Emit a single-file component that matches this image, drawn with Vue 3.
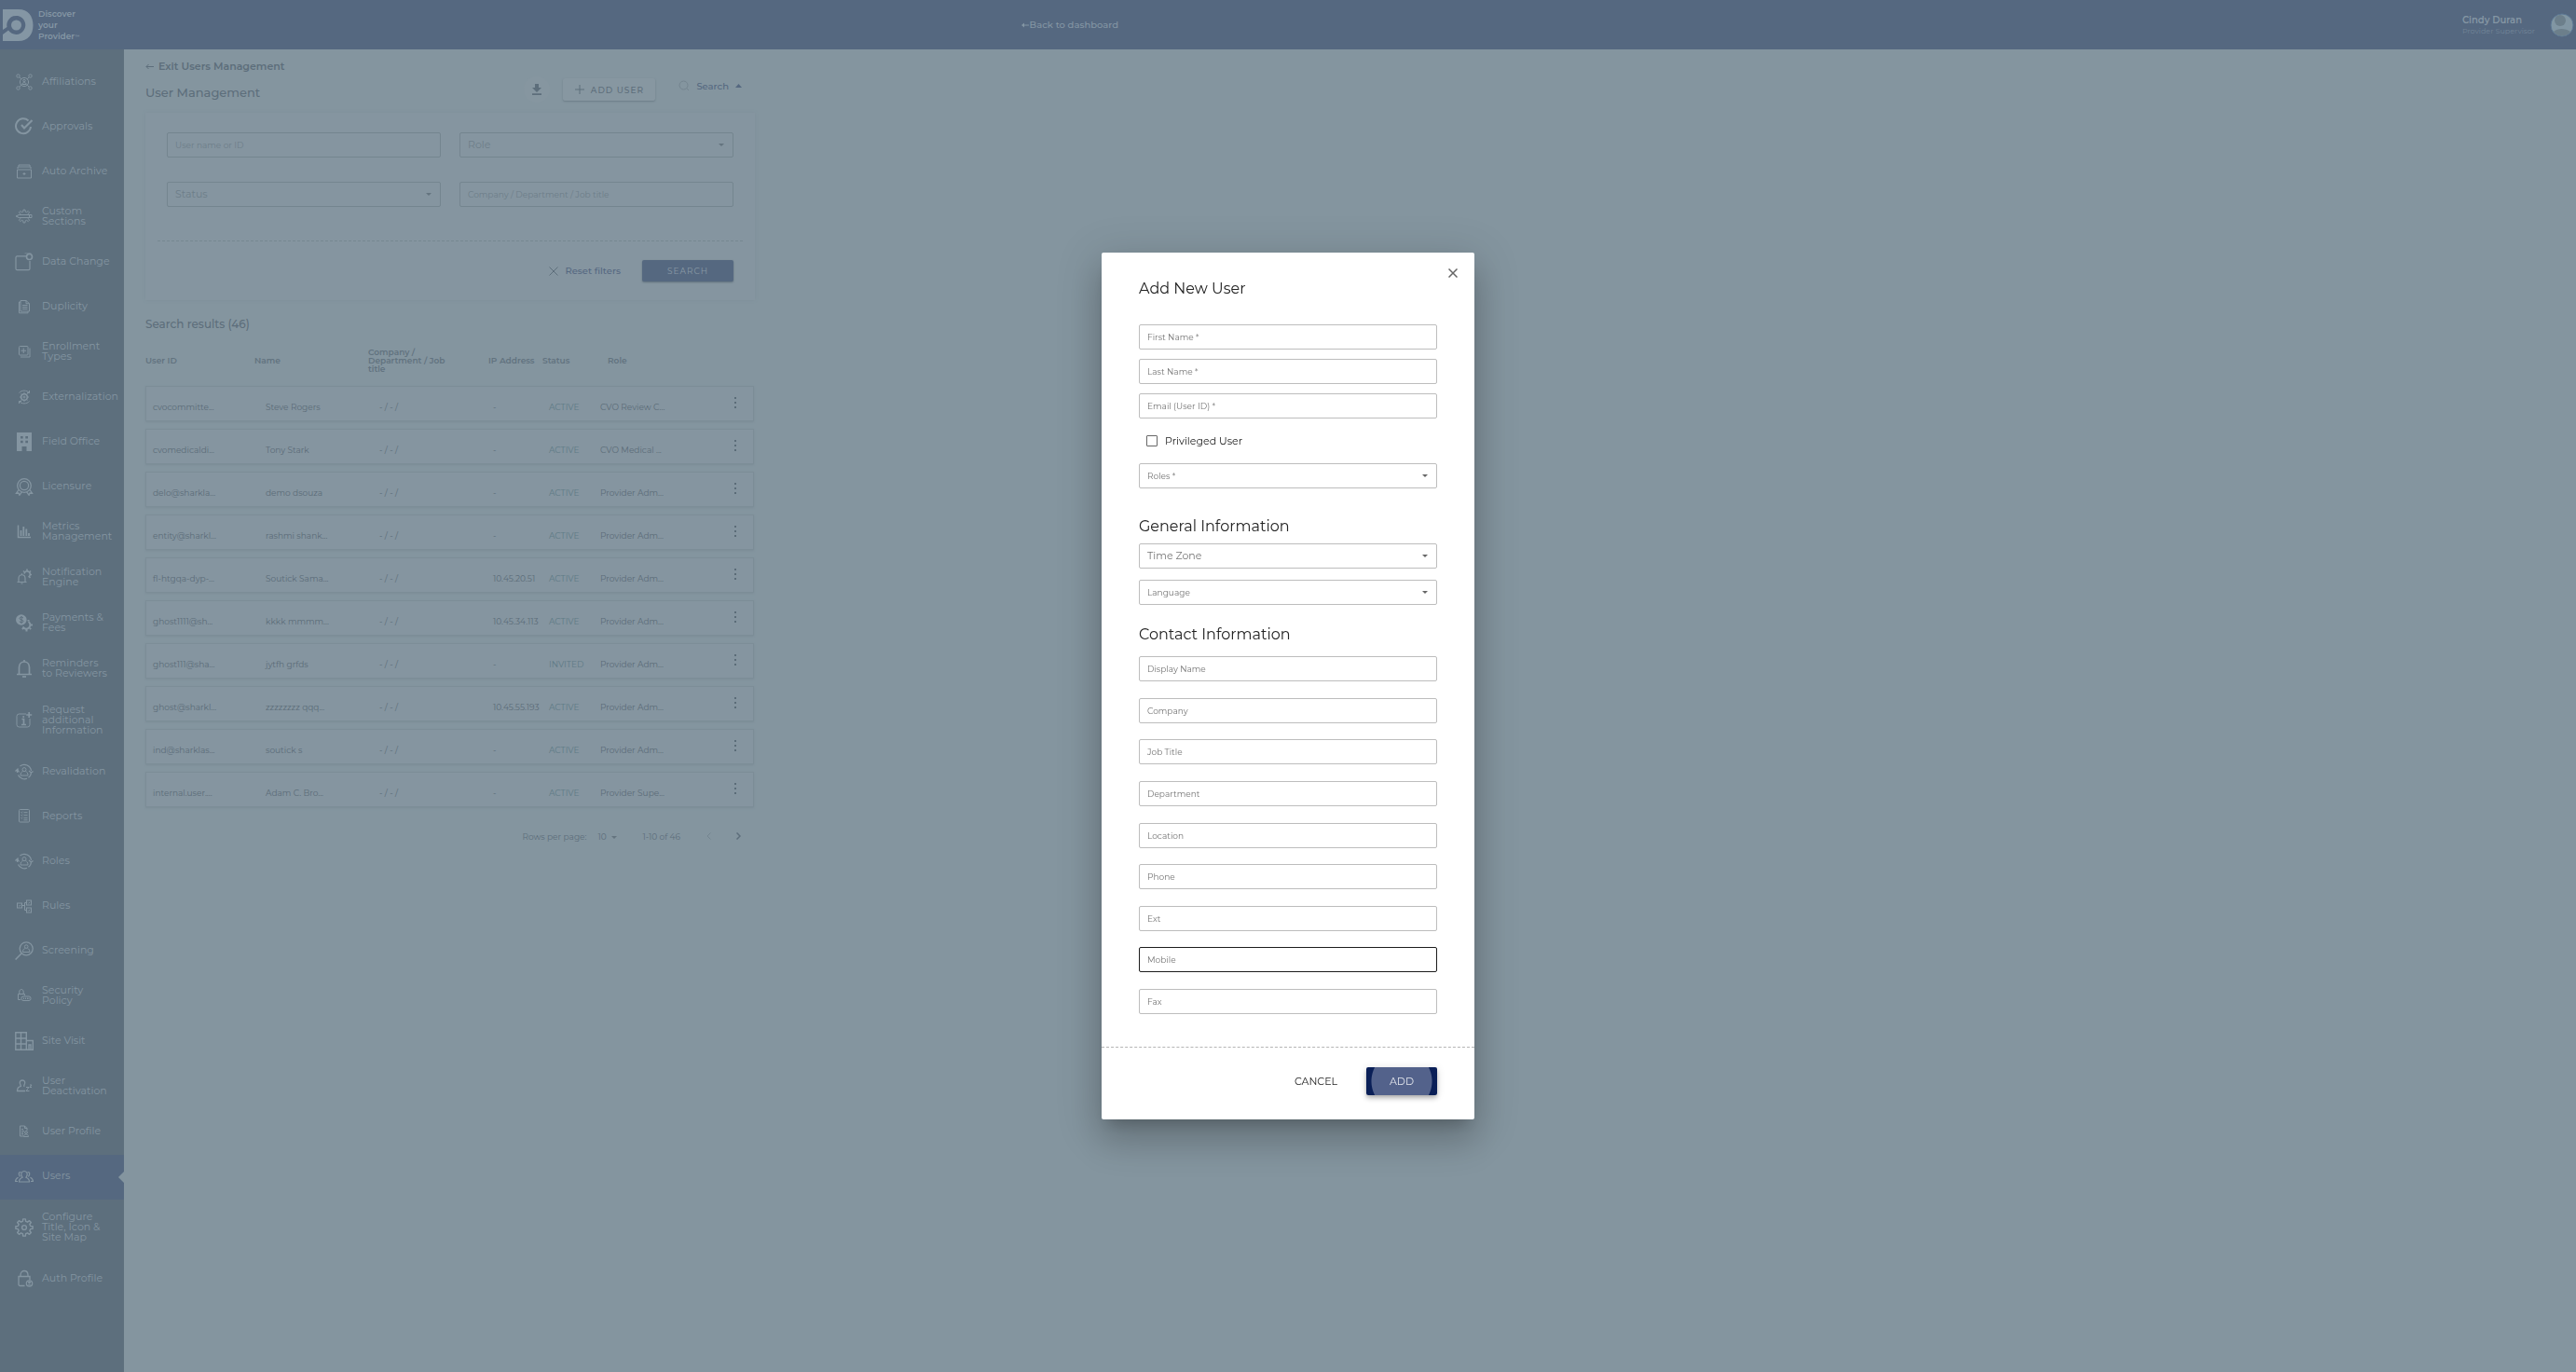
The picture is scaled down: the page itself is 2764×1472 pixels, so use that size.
<script setup>
import { ref } from 'vue'

// Outline of an eight-toothed cog centred in the 20x20 icon box
function cog(outer, inner) {
  const points = []
  for (let i = 0; i < 8; i++) {
    for (const [offset, radius] of [[-14, inner], [-8, outer], [8, outer], [14, inner]]) {
      const a = ((i * 45 + offset) * Math.PI) / 180
      points.push((10 + radius * Math.sin(a)).toFixed(2) + ' ' + (10 - radius * Math.cos(a)).toFixed(2))
    }
  }
  return '<path d="M' + points.join('L') + 'z"/>'
}

const person = '<circle cx="10" cy="7.6" r="2"/><path d="M6 14c0-3 1.200-4 2.600-4.400M14 14c0-3-1.200-4-2.600-4.400M6 14h8"/>'
const cycle = '<path stroke-width="1.200" d="M2.500 11a7.500 7.500 0 0 1 1-4.500M5.500 4a7.500 7.500 0 0 1 12 5M17.500 10.500a7.500 7.500 0 0 1-3 5.800M0.500 9.500l2-2 2 3M15 9l2.500 2L19.500 9.500M3.500 13.500a7.500 7.500 0 0 0 9.500 3.800"/>'

const menu = ref([
  { label: 'Affiliations', icon: '<circle cx="3.500" cy="3.500" r="1.700"/><circle cx="16.500" cy="3.500" r="1.700"/><circle cx="3.500" cy="16.500" r="1.700"/><circle cx="16.500" cy="16.500" r="1.700"/><path d="M4.800 4.800l2 2M15.200 4.800l-2 2M4.800 15.200l2-2M15.200 15.200l-2-2"/><circle cx="10" cy="10" r="4.600"/><circle cx="10" cy="8.500" r="1.200"/><path d="M7.800 12.500c0-2.600 4.400-2.600 4.400 0z"/>' },
  { label: 'Approvals', icon: '<path stroke-width="2" d="M14.500 3.400A8 8 0 1 0 17 10"/><path stroke-width="2.200" d="M7 8l3 3.500 8.500-8.500"/>' },
  { label: 'Auto Archive', icon: '<path d="M4 4.500V3h12v1.500M3 7V5h14v2M2.500 8h15v9h-15zM8.500 12.500h3M10 11v3"/>' },
  { label: 'Custom\nSections', icon: cog(7, 5) + '<path fill="#5d6f7d" d="M1 10l3.500-1.500h13.500v3H4.500zM15.500 8.500v3"/>' },
  { label: 'Data Change', icon: '<path stroke-width="1.200" d="M12 3.800H2.500A1.500 1.500 0 0 0 1 5.300v11.900a1.500 1.500 0 0 0 1.500 1.500h12a1.500 1.500 0 0 0 1.500-1.500V9"/><circle cx="15.500" cy="4.500" r="3" stroke-width="1.600"/><path stroke-width=".6" d="M10.500.8h7"/>' },
  { label: 'Duplicity', icon: '<path d="M6 3.500h6l3.500 3.200V15H6zM12 3.500v3.200h3.500M6 5H4.500v11.800h9.500V15.200M8 8.500h5.500M8 10.500h5.500M8 12.500h5.500"/>' },
  { label: 'Enrollment\nTypes', icon: '<rect x="4.500" y="4.500" width="9.500" height="9.500" rx="1"/><path d="M9.250 6.500v5.500M6.500 9.250h5.500M16 6.500v9.500H6"/>' },
  { label: 'Externalization', icon: '<circle cx="10" cy="10" r="3.300" stroke-width="1.500"/><circle cx="10" cy="10" r="1"/><path d="M10 5v1.500M10 13.500V15M5 10h1.500M13.500 10H15M6.500 6.500l1 1M12.500 12.500l1 1M13.500 6.500l-1 1M7.500 12.500l-1 1M4.500 5.500c3-3.200 8-3.200 11 0M4.500 14.500c3 3.200 8 3.200 11 0M15.500 3v2.500H13M4.500 17v-2.500H7"/>' },
  { label: 'Field Office', icon: '<path fill="currentColor" stroke="none" fill-rule="evenodd" d="M2 0h16v20h-5.500v-5h-5v5H2zM6 4v2.500h2.700V4zM11.300 4v2.500H14V4zM6 8.800v2.500h2.700V8.800zM11.300 8.800v2.500H14V8.800z"/>' },
  { label: 'Licensure', icon: '<circle cx="10" cy="9" r="7.300" stroke-width="1.300"/><circle cx="10" cy="9" r="4.600" stroke-width="1.200"/><path stroke-width="1.300" d="M4 13.500l-2.500 3.700 2.500-.2.900 2.200 2.500-3.400M16 13.500l2.500 3.700-2.500-.2-.9 2.200-2.500-3.400"/>' },
  { label: 'Metrics\nManagement', icon: '<path stroke-width="1.500" d="M3.500 3.500v13H17"/><path stroke-width="1.800" d="M6.500 9v6M9.300 5v10M12.300 7.500v7.500M15 12v3"/>' },
  { label: 'Notification\nEngine', icon: '<path stroke-width="1.200" d="M2.500 15.500h10M4 15.500v-4c0-5 7-5 7 0v4M7.500 7.500V6.300M6.500 17h2"/><path stroke-width="1.600" d="M10 6.500a3.200 3.200 0 1 1 4.500 3.500M10 4.500L9 3.500M13 3V1.500M16 4.500l1-1M16.500 7.500H18M15.500 10l1 1"/>' },
  { label: 'Payments &\nFees', icon: '<circle cx="6.800" cy="7" r="5.800" fill="currentColor" stroke="none"/><path stroke="#5d6f7d" d="M9 5c-1.500-1.500-4-1-4 .5 0 2 4 1 4 3 0 1.500-2.800 1.700-4.200.3M7 3v8"/><path stroke-width="2" d="M8.500 14.500a4.200 4.200 0 1 0 6-5.500M14.500 8.500V7M17 12.500h2M16 16l1.200 1M12.500 17.500v2M9 16l-1.200 1"/>' },
  { label: 'Reminders\nto Reviewers', icon: '<path stroke-width="1.700" d="M2 16.500h16M4.500 16V9c0-8 11-8 11 0v7M10 3V1"/><path stroke-width="1.700" d="M8 19h4"/>' },
  { label: 'Request\nadditional\nInformation', tall: true, icon: '<path d="M12 3H4.500A2.500 2.500 0 0 0 2 5.500v9A2.500 2.500 0 0 0 4.500 17h9a2.500 2.500 0 0 0 2.500-2.500V8"/><path stroke-width="1.700" d="M15.200 1v6M12.200 4h6M7.500 8.500h2v6M7 14.500h5"/><circle cx="9.200" cy="6" r="1" fill="currentColor" stroke="none"/>' },
  { label: 'Revalidation', icon: cycle + person },
  { label: 'Reports', icon: '<rect x="4.500" y="2.500" width="11" height="13.500" rx="1"/><path d="M6.500 5.500l.7.700L8.400 5M9.500 5.700h4M6.500 8.500l.7.700L8.400 8M9.500 8.700h4M6.500 11.500l.7.700 1.200-1.200M9.500 11.700h4M9.500 13.800h4"/>' },
  { label: 'Roles', icon: cycle + person },
  { label: 'Rules', icon: '<rect x="2.500" y="7" width="5" height="5"/><rect x="12.500" y="4" width="5" height="5"/><rect x="12.500" y="12" width="5" height="5"/><path d="M7.500 9.500h2.500M12 6.500h-1.500v8H12M4 9.500l.8.800 1.500-1.500M14 6.500l.8.800L16.300 5.800M14 14.500l.8.800 1.500-1.500"/>' },
  { label: 'Screening', icon: '<circle cx="12.200" cy="7.800" r="7" stroke-width="1.300"/><path stroke-width="1.500" d="M7 13L.6 19.500"/><circle cx="12.200" cy="5.600" r="1.800"/><path d="M8.500 11.500c0-2.500 1-3.500 2.300-3.900M15.900 11.500c0-2.500-1-3.500-2.300-3.900M8.500 11.500h7.400"/>' },
  { label: 'Security\nPolicy', icon: '<path d="M6 14.500H3.500V8.500h7V10M4.800 8.500V6c0-3.300 4.400-3.300 4.400 0v2.500"/><rect x="7" y="11" width="10" height="4.500" rx="2"/><path d="M9.500 12.500v1.500M11.500 12.500v1.500M13.500 12.500v1.500M15 12.500v1.500"/>' },
  { label: 'Site Visit', icon: '<path stroke-width="1.400" d="M.8.800h11.500v18.400H.8zM.8 7h11.500M.8 13h11.500M6.500.8v18.400M12.300 9.500h7v9.700h-7M15 19v-5h2v5"/>' },
  { label: 'User\nDeactivation', icon: '<path stroke-width="1.300" d="M11 15.500H2.500c0-3 1-4.200 3.300-4.800.8-.3.700-.9.300-1.400C4.300 6.500 5.500 4 8 4s3.700 2.500 1.900 5.300c-.4.500-.3 1.100.5 1.400"/><path d="M12 11.500h3l-3 4h3.500M16 9h2l-2 2.500h2"/>' },
  { label: 'User Profile', icon: '<path d="M9 15H5.500V4h5L13 6.500V9M10.500 4v2.500H13M7 7.500h2M7 9.500h3M7 11.500h2M7 13h2"/><circle cx="12" cy="11" r="1.400"/><path d="M9.500 15.500c0-3.500 5-3.500 5 0z"/>' },
  { label: 'Users', active: true, icon: '<path stroke-width="1.200" d="M4.500 16c0-3 1.500-4 3.500-4.800C5.500 8 7 4.500 10 4.500s4.500 3.500 2 6.700c2 .8 3.500 1.800 3.500 4.800zM5.500 10.500C3 6.500 4.500 5.500 6.500 5.500M3 15.500H.6c0-2.500 1-3.500 3-4.300M14.500 10.500C17 6.500 15.500 5.500 13.500 5.500M17 15.500h2.400c0-2.500-1-3.500-3-4.300"/>' },
  { label: 'Configure\nTitle, Icon &\nSite Map', tall: true, icon: '<g stroke-width="1.400" stroke-linejoin="round">' + cog(9.2, 6.8) + '<circle cx="10" cy="10" r="2.400"/></g>' },
  { label: 'Auth Profile', icon: '<path stroke-width="1.300" d="M10.500 17.500h-5a1.500 1.500 0 0 1-1.500-1.500V7.500h12V11M6 7.500V6c0-6 8-6 8 0v1.500"/><circle cx="15.500" cy="15" r="3.200" stroke-width="1.200"/><circle cx="15.500" cy="14" r="1" fill="currentColor"/><path d="M13.500 16.800h4"/>' }
])

const users = ref([
  { id: 'cvocommitte...', name: 'Steve Rogers', ip: '-', status: 'ACTIVE', role: 'CVO Review C...' },
  { id: 'cvomedicaldi...', name: 'Tony Stark', ip: '-', status: 'ACTIVE', role: 'CVO Medical ...' },
  { id: 'delo@sharkla...', name: 'demo dsouza', ip: '-', status: 'ACTIVE', role: 'Provider Adm...' },
  { id: 'entity@sharkl...', name: 'rashmi shank...', ip: '-', status: 'ACTIVE', role: 'Provider Adm...' },
  { id: 'fl-htgqa-dyp-...', name: 'Soutick Sama...', ip: '10.45.20.51', status: 'ACTIVE', role: 'Provider Adm...' },
  { id: 'ghost1111@sh...', name: 'kkkk mmmm...', ip: '10.45.34.113', status: 'ACTIVE', role: 'Provider Adm...' },
  { id: 'ghost111@sha...', name: 'jytfh grfds', ip: '-', status: 'INVITED', role: 'Provider Adm...' },
  { id: 'ghost@sharkl...', name: 'zzzzzzzz qqq...', ip: '10.45.55.193', status: 'ACTIVE', role: 'Provider Adm...' },
  { id: 'ind@sharklas...', name: 'soutick s', ip: '-', status: 'ACTIVE', role: 'Provider Adm...' },
  { id: 'internal.user....', name: 'Adam C. Bro...', ip: '-', status: 'ACTIVE', role: 'Provider Supe...' }
])

const identityFields = ['First Name *', 'Last Name *', 'Email (User ID) *']
const contactFields = ['Display Name', 'Company', 'Job Title', 'Department', 'Location', 'Phone', 'Ext', 'Mobile', 'Fax']
</script>

<template>
  <div class="page">
    <header class="topbar">
      <a class="brand" href="#">
        <svg width="33" height="34" viewBox="0 0 33 34" aria-hidden="true">
          <path fill="currentColor" fill-rule="evenodd" d="M0 0h17c10 0 15.500 7 15.500 17S27 34 17 34H0v-7l6-4.500A10 10 0 1 0 4.500 19L0 22zM14.500 11.500a5.500 5.500 0 1 1 0 11 5.500 5.500 0 0 1 0-11z" />
        </svg>
        <span class="brand-text">Discover<br />your<br />Provider<small>™</small></span>
      </a>
      <a class="back" href="#">
        <svg width="9" height="6" viewBox="0 0 9 6" aria-hidden="true"><path fill="currentColor" d="M0 3l3-2.500v2h5v1H3v2z" /></svg>Back to dashboard
      </a>
      <div class="account">
        <div>
          <div class="account-name">Cindy Duran</div>
          <div class="account-role">Provider Supervisor</div>
        </div>
        <svg class="avatar" width="26" height="26" viewBox="0 0 26 26" aria-hidden="true">
          <circle cx="13" cy="13" r="12" fill="#8196a3" stroke="#5c7894" />
          <circle cx="11" cy="8" r="6" fill="#6c7f8b" />
          <path fill="#6c7f8b" d="M4 20c4-4 13-4 18 0-4 6-14 6-18 0z" />
        </svg>
      </div>
    </header>

    <div class="body">
      <nav class="sidebar">
        <a v-for="item in menu" :key="item.label" href="#" class="nav-item" :class="{ active: item.active, tall: item.tall }">
          <svg class="nav-icon" viewBox="0 0 20 20" fill="none" stroke="currentColor" aria-hidden="true" v-html="item.icon"></svg>
          <span class="nav-label">{{ item.label }}</span>
        </a>
      </nav>

      <main class="content">
        <a class="exit" href="#">
          <svg width="9" height="7" viewBox="0 0 9 7" fill="none" stroke="currentColor" aria-hidden="true"><path d="M9 3.500H1M3.500 1L1 3.500 3.500 6" /></svg>
          Exit Users Management
        </a>
        <div class="title-row">
          <h1>User Management</h1>
          <button class="download" type="button" aria-label="Download">
            <svg width="10" height="12" viewBox="0 0 10 12" fill="currentColor" aria-hidden="true"><path d="M3 0h4v4h3L5 9 0 4h3zM0 10.300h10V12H0z" /></svg>
          </button>
          <button class="add-user" type="button">
            <svg width="10" height="10" viewBox="0 0 10 10" stroke="currentColor" aria-hidden="true"><path d="M5 0v10M0 5h10" /></svg>
            ADD USER
          </button>
          <button class="search-toggle" type="button">
            <svg width="12" height="12" viewBox="0 0 12 12" fill="none" stroke="#74848f" aria-hidden="true"><circle cx="5.500" cy="5.500" r="4.500" /><path d="M8.800 8.800l2.200 2.200" /></svg>
            Search
            <svg width="7" height="4" viewBox="0 0 7 4" fill="currentColor" aria-hidden="true"><path d="M0 4l3.500-4L7 4z" /></svg>
          </button>
        </div>

        <form class="filters" @submit.prevent>
          <div class="filter-grid">
            <input class="box" type="text" placeholder="User name or ID" aria-label="User name or ID" />
            <span class="picker"><select class="box large" aria-label="Role"><option>Role</option></select></span>
            <span class="picker"><select class="box large" aria-label="Status"><option>Status</option></select></span>
            <input class="box" type="text" placeholder="Company / Department / Job title" aria-label="Company / Department / Job title" />
          </div>
          <div class="filter-actions">
            <button class="reset" type="reset">
              <svg width="10" height="10" viewBox="0 0 10 10" stroke="#5d6e7b" aria-hidden="true"><path d="M.5.500l9 9M9.500.500l-9 9" /></svg>
              Reset filters
            </button>
            <button class="run" type="submit">SEARCH</button>
          </div>
        </form>

        <h2>Search results (46)</h2>
        <table>
          <colgroup>
            <col class="c-id" /><col class="c-wide" /><col class="c-wide" /><col class="c-ip" /><col class="c-status" /><col class="c-role" /><col />
          </colgroup>
          <thead>
            <tr>
              <th>User ID</th>
              <th>Name</th>
              <th>Company /<br />Department / Job<br />title</th>
              <th class="h-ip">IP Address</th>
              <th class="h-status">Status</th>
              <th class="h-role">Role</th>
              <th></th>
            </tr>
          </thead>
          <tbody>
            <tr v-for="u in users" :key="u.id">
              <td>{{ u.id }}</td>
              <td>{{ u.name }}</td>
              <td>- / - /</td>
              <td>{{ u.ip }}</td>
              <td class="status">{{ u.status }}</td>
              <td>{{ u.role }}</td>
              <td>
                <button class="more" type="button" aria-label="Row actions">
                  <svg width="2" height="12" viewBox="0 0 2 12" fill="currentColor" aria-hidden="true"><path d="M0 0h2v2H0zM0 5h2v2H0zM0 10h2v2H0z" /></svg>
                </button>
              </td>
            </tr>
          </tbody>
        </table>

        <div class="pager">
          <label for="page-size">Rows per page:</label>
          <span class="picker size"><select id="page-size"><option>10</option></select></span>
          <span class="range">1-10 of 46</span>
          <button class="prev" type="button" aria-label="Previous page">
            <svg width="5" height="8" viewBox="0 0 5 8" fill="none" stroke="currentColor" aria-hidden="true"><path d="M4.500.500L1 4l3.500 3.500" /></svg>
          </button>
          <button type="button" aria-label="Next page">
            <svg width="5" height="8" viewBox="0 0 5 8" fill="none" stroke="currentColor" stroke-width="1.500" aria-hidden="true"><path d="M.500.500L4 4 .500 7.500" /></svg>
          </button>
        </div>
      </main>
    </div>

    <div class="backdrop">
      <form class="dialog" role="dialog" aria-labelledby="dialog-title" @submit.prevent>
        <button class="close" type="button" aria-label="Close">
          <svg width="10" height="10" viewBox="0 0 10 10" stroke="currentColor" stroke-width="1.500" aria-hidden="true"><path d="M.500.500l9 9M9.500.500l-9 9" /></svg>
        </button>
        <div class="dialog-body">
          <h2 id="dialog-title">Add New User</h2>
          <div class="identity">
            <input v-for="f in identityFields" :key="f" class="box" type="text" :placeholder="f" :aria-label="f" />
          </div>
          <label class="privileged"><input type="checkbox" />Privileged User</label>
          <span class="picker"><select class="box" aria-label="Roles"><option>Roles *</option></select></span>

          <h3>General Information</h3>
          <div class="general">
            <span class="picker"><select class="box large" aria-label="Time Zone"><option>Time Zone</option></select></span>
            <span class="picker"><select class="box" aria-label="Language"><option>Language</option></select></span>
          </div>

          <h3 class="contact-title">Contact Information</h3>
          <div class="contact">
            <input v-for="f in contactFields" :key="f" class="box" :class="{ current: f === 'Mobile' }" type="text" :placeholder="f" :aria-label="f" />
          </div>
        </div>
        <footer class="dialog-footer">
          <button class="cancel" type="button">CANCEL</button>
          <button class="add" type="submit">ADD</button>
        </footer>
      </form>
    </div>
  </div>
</template>

<style>
body {
  margin: 0;
  background: #84959f;
}
</style>

<style scoped>
* {
  box-sizing: border-box;
}

.page {
  display: flex;
  flex-direction: column;
  min-height: 100vh;
  background: #84959f;
  color: #5d6e7b;
  font-family: Montserrat, Inter, "Open Sans", sans-serif;
  font-size: 11px;
}

a {
  color: inherit;
  text-decoration: none;
}

button {
  padding: 0;
  border: 0;
  background: none;
  color: inherit;
  font: inherit;
}

h1, h2, h3 {
  margin: 0;
  font-weight: 400;
}

.topbar {
  display: flex;
  align-items: center;
  height: 53px;
  background: #556880;
  color: #8496a4;
}

.brand {
  display: flex;
  align-items: center;
  gap: 5px;
  width: calc(40% - 10px);
  padding-left: 3px;
}

.brand-text {
  font-size: 9px;
  font-weight: 600;
  line-height: 12px;
}

.brand-text small {
  font-size: 5px;
  vertical-align: top;
}

.back {
  display: flex;
  align-items: center;
  font-size: 10px;
  font-weight: 500;
}

.account {
  display: flex;
  align-items: center;
  gap: 16px;
  margin-left: auto;
  padding-right: 2px;
}

.account-name {
  font-size: 10px;
  font-weight: 600;
  line-height: 12px;
}

.account-role {
  color: #728598;
  font-size: 8px;
  line-height: 10px;
}

.body {
  display: flex;
  flex: 1;
}

.sidebar {
  flex: 0 0 133px;
  padding-top: 12px;
  background: #5d6f7d;
  color: #8495a1;
}

.nav-item {
  display: flex;
  align-items: center;
  gap: 9px;
  min-height: 48px;
  padding: 12px 0 15px 16px;
}

.nav-item.tall {
  min-height: 62px;
}

.nav-item.active {
  position: relative;
  background: #556880;
}

.nav-item.active::after {
  content: "";
  position: absolute;
  right: 0;
  top: 18px;
  border: 6px solid transparent;
  border-left: 0;
  border-right-color: #84959f;
}

.nav-icon {
  flex: none;
  width: 20px;
  height: 20px;
  margin: -4px 0;
}

.nav-label {
  line-height: 11px;
  white-space: pre;
}

.content {
  width: 677px;
  padding: 10px 0 0 23px;
}

.exit {
  display: flex;
  align-items: center;
  gap: 5px;
  height: 16px;
  font-weight: 600;
}

.title-row {
  display: flex;
  align-items: center;
  height: 34px;
}

h1 {
  margin-right: auto;
  padding-top: 6px;
  font-size: 13px;
  font-weight: 500;
  line-height: 20px;
}

.download {
  display: grid;
  place-items: center;
  width: 28px;
  height: 28px;
  margin-right: 14px;
  border-radius: 50%;
  background: #8696a0;
}

.add-user {
  display: flex;
  align-items: center;
  justify-content: center;
  gap: 7px;
  width: 99px;
  height: 24px;
  border-radius: 2px;
  background: #8797a1;
  box-shadow: 0 1px 2px #6b7c87;
  font-size: 9px;
  font-weight: 500;
  letter-spacing: 1px;
}

.search-toggle {
  display: flex;
  align-items: center;
  gap: 7px;
  margin-right: 14px;
  margin-left: 25px;
  padding-bottom: 8px;
  color: #556880;
  font-size: 10px;
  font-weight: 500;
}

.filters {
  margin-top: 8px;
  padding: 21px 13px 20px;
  background: #8595a0;
  box-shadow: 0 0 3px #7e8f99;
}

.filter-grid {
  display: grid;
  grid-template-columns: 1fr 1fr;
  gap: 26px 20px;
  padding: 0 10px 36px;
  border-bottom: 1px dashed #768791;
}

.box {
  display: block;
  width: 100%;
  height: 27px;
  margin: 0;
  padding: 0 8px;
  border: 1px solid #74858f;
  border-radius: 2px;
  outline: 0;
  background: none;
  appearance: none;
  color: #6d7e89;
  font-family: inherit;
  font-size: 9px;
}

.box::placeholder {
  color: inherit;
  opacity: 1;
}

.box.large {
  padding-bottom: 2px;
  font-size: 11px;
}

.picker {
  display: block;
  position: relative;
}

.picker::after {
  content: "";
  position: absolute;
  top: 12px;
  right: 10px;
  border: 3px solid transparent;
  border-top-color: #64747f;
  border-bottom: 0;
  pointer-events: none;
}

.filter-actions {
  display: flex;
  align-items: center;
  justify-content: flex-end;
  gap: 23px;
  padding: 20px 10px 0 0;
}

.reset {
  display: flex;
  align-items: center;
  gap: 7px;
  color: #556880;
  font-size: 10px;
  font-weight: 500;
}

.run {
  width: 98px;
  height: 23px;
  border-radius: 2px;
  background: #556880;
  box-shadow: 0 1px 2px #5f707c;
  color: #8a9aa6;
  font-size: 9px;
  letter-spacing: 1px;
}

.content h2 {
  margin-top: 16px;
  font-size: 12px;
  font-weight: 500;
  line-height: 20px;
}

table {
  width: 653px;
  border-spacing: 0 8px;
  table-layout: fixed;
  font-size: 9px;
}

.c-id { width: 117px; }
.c-wide { width: 122px; }
.c-ip { width: 60px; }
.c-status { width: 59px; }
.c-role { width: 140px; }

th {
  height: 40px;
  padding: 0;
  color: #62737f;
  font-weight: 600;
  line-height: 9px;
  text-align: left;
  white-space: nowrap;
}

.h-ip { padding-left: 7px; }
.h-status { padding-left: 5px; }
.h-role { padding-left: 16px; }

tbody tr {
  box-shadow: 0 1px 2px #7c8d97;
}

td {
  height: 38px;
  padding: 6px 0 0 12px;
  border: solid #7c8d97;
  border-width: 1px 0;
  background: #8595a0;
  color: #5b6c78;
  white-space: nowrap;
}

td:first-child {
  padding-left: 7px;
  border-left-width: 1px;
}

td:last-child {
  padding-top: 0;
  border-right-width: 1px;
}

td:nth-child(6) {
  padding-left: 8px;
}

td.status {
  color: #5f7b86;
}

.more {
  display: block;
}

.pager {
  display: flex;
  align-items: center;
  justify-content: flex-end;
  height: 20px;
  margin-top: 13px;
  padding-right: 15px;
  font-size: 9px;
}

.picker.size {
  margin: 0 26px 0 12px;
}

.size select {
  width: 22px;
  padding: 0;
  border: 0;
  background: none;
  appearance: none;
  color: inherit;
  font: inherit;
}

.picker.size::after {
  top: 5px;
  right: 1px;
}

.range {
  margin-right: 28px;
}

.pager .prev {
  margin-right: 27px;
  color: #73848f;
}

.backdrop {
  position: fixed;
  inset: 0;
  display: flex;
  align-items: center;
  justify-content: center;
}

.dialog {
  position: relative;
  width: 400px;
  border-radius: 2px;
  background: #fff;
  box-shadow: 0 11px 15px -7px rgba(0, 0, 0, 0.2), 0 24px 38px 3px rgba(0, 0, 0, 0.14), 0 9px 46px 8px rgba(0, 0, 0, 0.12);
  color: #222;
}

.close {
  position: absolute;
  top: 12px;
  right: 13px;
  display: grid;
  place-items: center;
  width: 20px;
  height: 20px;
  color: #666;
}

.dialog-body {
  padding: 28px 40px 35px;
}

.dialog h2,
.dialog h3 {
  font-size: 16px;
  font-weight: 400;
  line-height: 22px;
}

.dialog h2 {
  margin-top: 0;
}

.dialog .box {
  border-color: #bdbdbd;
  color: #757575;
}

.dialog .picker::after {
  border-top-color: #666;
}

.identity {
  display: grid;
  gap: 10px;
  margin-top: 27px;
}

.privileged {
  display: flex;
  align-items: center;
  gap: 8px;
  height: 48px;
  padding-left: 8px;
}

.privileged input {
  width: 12px;
  height: 12px;
  margin: 0;
  border: 1px solid #666;
  border-radius: 1px;
  appearance: none;
}

.dialog h3 {
  margin-top: 30px;
}

.general {
  display: grid;
  gap: 12px;
  margin-top: 7px;
}

.dialog .contact-title {
  margin-top: 21px;
}

.contact {
  display: grid;
  align-content: space-between;
  min-height: 384px;
  margin-top: 12px;
}

.dialog .box.current {
  border-color: #1c1c1c;
}

.dialog-footer {
  display: flex;
  align-items: center;
  justify-content: flex-end;
  gap: 31px;
  padding: 21px 40px 26px 0;
  border-top: 1px dashed #b5b5b5;
}

.add {
  width: 76px;
  height: 30px;
  border-radius: 2px;
  background: radial-gradient(circle, #53628b 32px, #0a1f57 33px);
  box-shadow: 0 2px 4px -1px rgba(0, 0, 0, 0.2), 0 4px 5px rgba(0, 0, 0, 0.14), 0 1px 10px rgba(0, 0, 0, 0.12);
  color: #e2e5ec;
}
</style>
